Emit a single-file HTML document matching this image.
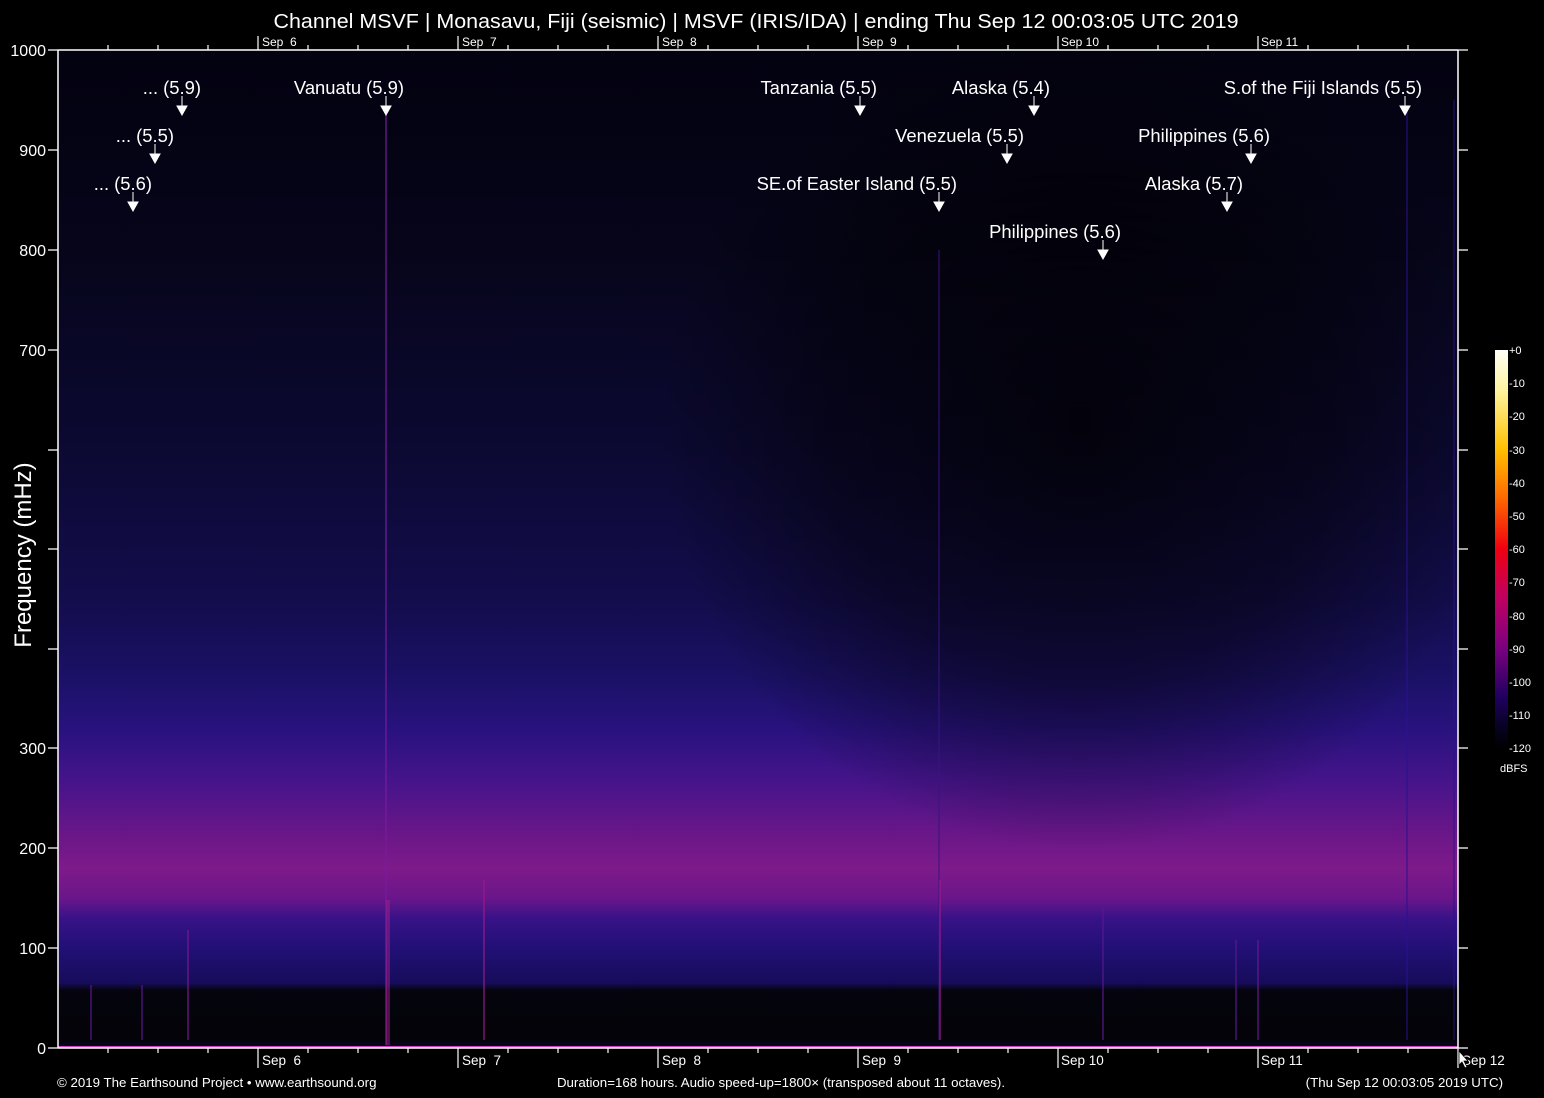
<!DOCTYPE html>
<html><head><meta charset="utf-8"><style>
html,body{margin:0;padding:0;background:#000;}
svg{display:block;font-family:"Liberation Sans",Arial,sans-serif;}
</style></head><body>
<svg width="1544" height="1098" viewBox="0 0 1544 1098" xmlns="http://www.w3.org/2000/svg">
<defs>
<linearGradient id="v" x1="0" y1="50" x2="0" y2="1048" gradientUnits="userSpaceOnUse">
<stop offset="0" stop-color="#030210"/>
<stop offset="0.2" stop-color="#06051a"/>
<stop offset="0.4" stop-color="#0c0932"/>
<stop offset="0.55" stop-color="#130d4c"/>
<stop offset="0.63" stop-color="#1b1166"/>
<stop offset="0.68" stop-color="#28127e"/>
<stop offset="0.73" stop-color="#44148a"/>
<stop offset="0.78" stop-color="#661688"/>
<stop offset="0.82" stop-color="#7e1a8a"/>
<stop offset="0.85" stop-color="#6a168a"/>
<stop offset="0.87" stop-color="#381288"/>
<stop offset="0.9" stop-color="#221076"/>
<stop offset="0.935" stop-color="#160c5a"/>
<stop offset="0.942" stop-color="#05040e"/>
<stop offset="0.99" stop-color="#030308"/>
<stop offset="1" stop-color="#0a0520"/>
</linearGradient>
<radialGradient id="dk" cx="1080" cy="430" r="420" gradientUnits="userSpaceOnUse">
<stop offset="0" stop-color="#000" stop-opacity="0.75"/>
<stop offset="0.6" stop-color="#000" stop-opacity="0.45"/>
<stop offset="1" stop-color="#000" stop-opacity="0"/>
</radialGradient>
<linearGradient id="cb" x1="0" y1="350" x2="0" y2="748" gradientUnits="userSpaceOnUse">
<stop offset="0" stop-color="#fffff8"/>
<stop offset="0.1" stop-color="#fff4a0"/>
<stop offset="0.25" stop-color="#ffc000"/>
<stop offset="0.37" stop-color="#ff6a00"/>
<stop offset="0.5" stop-color="#f00010"/>
<stop offset="0.62" stop-color="#c00060"/>
<stop offset="0.75" stop-color="#7a0080"/>
<stop offset="0.87" stop-color="#200060"/>
<stop offset="0.95" stop-color="#060320"/>
<stop offset="1" stop-color="#000"/>
</linearGradient>
</defs>
<text x="756" y="28" fill="#fff" font-size="20" text-anchor="middle" textLength="965" lengthAdjust="spacingAndGlyphs">Channel MSVF | Monasavu, Fiji (seismic) | MSVF (IRIS/IDA) | ending Thu Sep 12 00:03:05 UTC 2019</text>
<rect x="58" y="50" width="1400" height="998" fill="url(#v)"/>
<rect x="58" y="50" width="1400" height="998" fill="url(#dk)"/>
<g stroke-width="2">
<line x1="386" y1="115" x2="386" y2="1045" stroke="#7a1aa0" opacity="0.6"/>
<line x1="388" y1="900" x2="388" y2="1045" stroke="#a0208a" opacity="0.5" stroke-width="4"/>
<line x1="484" y1="880" x2="484" y2="1040" stroke="#9a1a8a" opacity="0.6"/>
<line x1="939" y1="250" x2="939" y2="1040" stroke="#3a1480" opacity="0.5"/>
<line x1="940" y1="880" x2="940" y2="1040" stroke="#9a1a8a" opacity="0.6"/>
<line x1="1407" y1="110" x2="1407" y2="1040" stroke="#2a1290" opacity="0.5"/>
<line x1="1454" y1="100" x2="1454" y2="1040" stroke="#2a1290" opacity="0.4"/>
<line x1="1103" y1="900" x2="1103" y2="1040" stroke="#5a1690" opacity="0.6"/>
<line x1="1236" y1="940" x2="1236" y2="1040" stroke="#5a1690" opacity="0.6"/>
<line x1="1258" y1="940" x2="1258" y2="1040" stroke="#6a1890" opacity="0.6"/>
<line x1="188" y1="930" x2="188" y2="1040" stroke="#7a1890" opacity="0.6"/>
<line x1="142" y1="985" x2="142" y2="1040" stroke="#5a1690" opacity="0.6"/>
<line x1="91" y1="985" x2="91" y2="1040" stroke="#5a1690" opacity="0.6"/>
</g>
<line x1="58" y1="1047" x2="1458" y2="1047" stroke="#d040c0" stroke-width="2"/>
<g stroke="#fff" stroke-width="1.5" fill="none">
<line x1="58" y1="50" x2="1458" y2="50"/>
<line x1="58" y1="50" x2="58" y2="1048"/>
<line x1="1458" y1="50" x2="1458" y2="1048"/>
<line x1="58" y1="1048" x2="1458" y2="1048"/>
</g>
<g stroke="#fff" stroke-width="1.2">
<path d="M48 50H58M48 150H58M48 250H58M48 350H58M48 450H58M48 549H58M48 649H58M48 748H58M48 848H58M48 948H58M48 1048H58"/>
<path d="M1458 50H1468M1458 150H1468M1458 250H1468M1458 350H1468M1458 450H1468M1458 549H1468M1458 649H1468M1458 748H1468M1458 848H1468M1458 948H1468M1458 1048H1468"/>
<path d="M108 50V45M158 50V45M208 50V45M258 50V36M308 50V45M358 50V45M408 50V45M458 50V36M508 50V45M558 50V45M608 50V45M658 50V36M708 50V45M758 50V45M808 50V45M858 50V36M908 50V45M958 50V45M1008 50V45M1058 50V36M1108 50V45M1158 50V45M1208 50V45M1258 50V36M1308 50V45M1358 50V45M1408 50V45"/>
<path d="M108 1048V1053M158 1048V1053M208 1048V1053M258 1048V1068M308 1048V1053M358 1048V1053M408 1048V1053M458 1048V1068M508 1048V1053M558 1048V1053M608 1048V1053M658 1048V1068M708 1048V1053M758 1048V1053M808 1048V1053M858 1048V1068M908 1048V1053M958 1048V1053M1008 1048V1053M1058 1048V1068M1108 1048V1053M1158 1048V1053M1208 1048V1053M1258 1048V1068M1308 1048V1053M1358 1048V1053M1408 1048V1053M1458 1048V1068"/>
</g>
<g fill="#fff" font-size="16" text-anchor="end">
<text x="46" y="56">1000</text><text x="46" y="156">900</text><text x="46" y="256">800</text>
<text x="46" y="356">700</text><text x="46" y="754">300</text><text x="46" y="854">200</text>
<text x="46" y="954">100</text><text x="46" y="1054">0</text>
</g>
<text transform="translate(31 555) rotate(-90)" fill="#fff" font-size="24" text-anchor="middle">Frequency (mHz)</text>
<g fill="#fff" font-size="12">
<text x="262" y="46">Sep&#160; 6</text><text x="462" y="46">Sep&#160; 7</text><text x="662" y="46">Sep&#160; 8</text>
<text x="862" y="46">Sep&#160; 9</text><text x="1061" y="46">Sep 10</text><text x="1261" y="46">Sep 11</text>
</g>
<g fill="#fff" font-size="13.5">
<text x="262" y="1065">Sep&#160; 6</text><text x="462" y="1065">Sep&#160; 7</text><text x="662" y="1065">Sep&#160; 8</text>
<text x="862" y="1065">Sep&#160; 9</text><text x="1061" y="1065">Sep 10</text><text x="1261" y="1065">Sep 11</text>
<text x="1462" y="1065">Sep 12</text>
</g>
<path d="M1459 1051l0 14 3-3 3 6 2-1-3-6 4 0z" fill="#fff" stroke="#000" stroke-width="0.8"/>
<g fill="#fff" font-size="13.3">
<text x="57" y="1087">© 2019 The Earthsound Project • www.earthsound.org</text>
<text x="781" y="1087" text-anchor="middle">Duration=168 hours. Audio speed-up=1800× (transposed about 11 octaves).</text>
<text x="1503" y="1087" text-anchor="end">(Thu Sep 12 00:03:05 2019 UTC)</text>
</g>
<g fill="#fff" font-size="18.4" text-anchor="end">
<text x="201" y="94">... (5.9)</text>
<text x="174" y="142">... (5.5)</text>
<text x="152" y="190">... (5.6)</text>
<text x="404" y="94">Vanuatu (5.9)</text>
<text x="877" y="94">Tanzania (5.5)</text>
<text x="1050" y="94">Alaska (5.4)</text>
<text x="1422" y="94">S.of the Fiji Islands (5.5)</text>
<text x="1024" y="142">Venezuela (5.5)</text>
<text x="1270" y="142">Philippines (5.6)</text>
<text x="957" y="190">SE.of Easter Island (5.5)</text>
<text x="1243" y="190">Alaska (5.7)</text>
<text x="1121" y="238">Philippines (5.6)</text>
</g>
<g fill="#fff" stroke="#fff" stroke-width="1">
<path d="M182 96V106M177 106H187L182 115Z"/>
<path d="M155 144V154M150 154H160L155 163Z"/>
<path d="M133 192V202M128 202H138L133 211Z"/>
<path d="M386 96V106M381 106H391L386 115Z"/>
<path d="M860 96V106M855 106H865L860 115Z"/>
<path d="M1034 96V106M1029 106H1039L1034 115Z"/>
<path d="M1405 96V106M1400 106H1410L1405 115Z"/>
<path d="M1007 144V154M1002 154H1012L1007 163Z"/>
<path d="M1251 144V154M1246 154H1256L1251 163Z"/>
<path d="M939 192V202M934 202H944L939 211Z"/>
<path d="M1227 192V202M1222 202H1232L1227 211Z"/>
<path d="M1103 240V250M1098 250H1108L1103 259Z"/>
</g>
<rect x="1495" y="350" width="13" height="398" fill="url(#cb)"/>
<g fill="#fff" font-size="11">
<text x="1509" y="354">+0</text><text x="1509" y="387">-10</text><text x="1509" y="420">-20</text>
<text x="1509" y="454">-30</text><text x="1509" y="487">-40</text><text x="1509" y="520">-50</text>
<text x="1509" y="553">-60</text><text x="1509" y="586">-70</text><text x="1509" y="620">-80</text>
<text x="1509" y="653">-90</text><text x="1509" y="686">-100</text><text x="1509" y="719">-110</text>
<text x="1509" y="752">-120</text>
<text x="1500" y="772">dBFS</text>
</g>
</svg>
</body></html>
